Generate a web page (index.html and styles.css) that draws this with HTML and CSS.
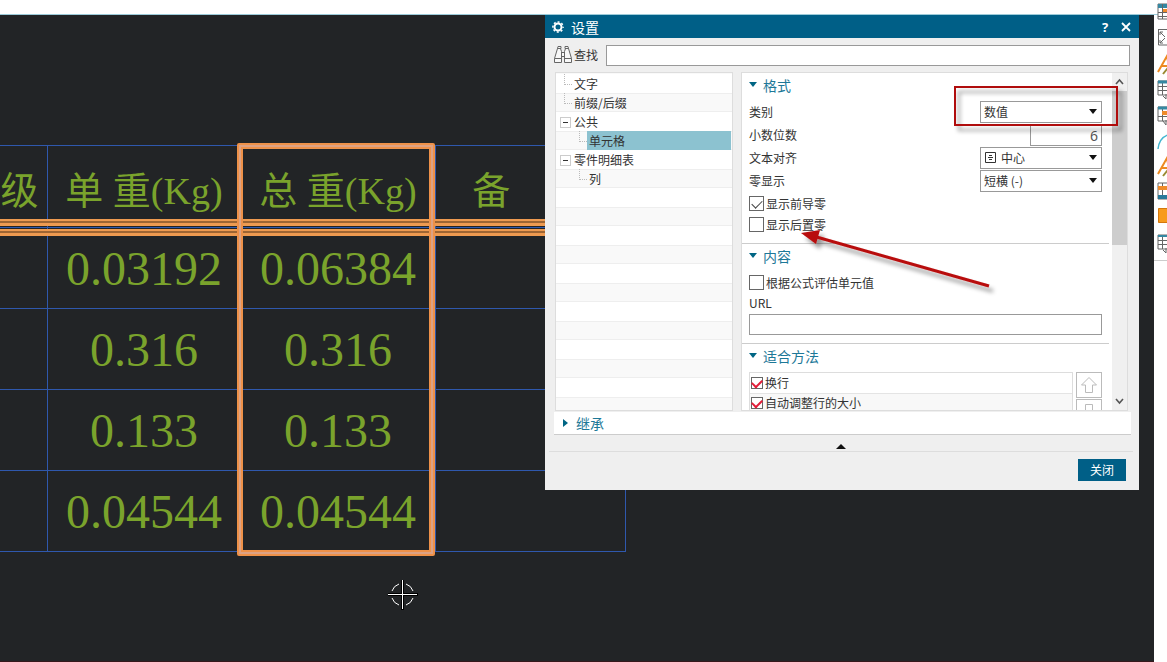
FILE: index.html
```html
<!DOCTYPE html>
<html lang="zh-CN">
<head>
<meta charset="utf-8">
<title>设置</title>
<link rel="stylesheet" href="styles.css">
</head>
<body>
<div class="topbar"></div>
<main class="workspace">
  <section class="canvas">
    <div class="drawing">
      <table class="parts">
        <colgroup><col class="c-grade"><col class="c-weight"><col class="c-weight"><col class="c-note"></colgroup>
        <thead><tr><th class="grade">级</th><th>单 重(Kg)</th><th>总 重(Kg)</th><th class="note">备</th></tr></thead>
        <tbody>
          <tr><td></td><td>0.03192</td><td>0.06384</td><td></td></tr>
          <tr><td></td><td>0.316</td><td>0.316</td><td></td></tr>
          <tr><td></td><td>0.133</td><td>0.133</td><td></td></tr>
          <tr><td></td><td>0.04544</td><td>0.04544</td><td></td></tr>
        </tbody>
      </table>
      <div class="rule rule-top"></div>
      <div class="rule rule-bottom"></div>
      <div class="column-mark"></div>
    </div>
    <svg class="cursor" width="30" height="30" viewBox="0 0 30 30" fill="none" stroke="#fff">
      <path d="M14.5 0v30M0 14.5h30" stroke="#000" stroke-width="3"/>
      <path d="M14.5 0v29M0 14.5h29"/>
      <path d="M4 11a11 11 0 0 1 7-7M18 4a11 11 0 0 1 7 7M25 18a11 11 0 0 1-7 7M11 25a11 11 0 0 1-7-7"/>
    </svg>

    <form class="dialog" aria-labelledby="dialog-title">
      <header class="titlebar">
        <svg width="12" height="12" viewBox="0 0 12 12" fill="none" stroke="#fff">
          <circle cx="6" cy="6" r="3.5" stroke-width="2"/>
          <circle cx="6" cy="6" r="5.100" stroke-width="1.500" stroke-dasharray="2 2" stroke-dashoffset="1"/>
        </svg>
        <h1 id="dialog-title">设置</h1>
        <button type="button" class="title-btn" aria-label="帮助">?</button>
        <button type="button" class="title-btn" aria-label="关闭窗口"><svg width="10" height="10" viewBox="0 0 10 10" stroke="#fff" stroke-width="1.8"><path d="M1 1l8 8M9 1L1 9"/></svg></button>
      </header>
      <div class="search">
        <svg width="20" height="20" viewBox="0 0 20 20" fill="#f8f8f8" stroke="#666">
          <path d="M4.5 3.5h3l1 3v11h-7v-4zM12.5 3.5h3l3 10v4h-7v-11zM1.500 13.500h7M11.500 13.500h7M5 1.500h3v2H4.500zM12 1.500h3l.5 2h-3.500zM8.500 7.500h3v4h-3z"/>
        </svg>
        <label for="find">查找</label>
        <input id="find" type="text">
      </div>
      <div class="body">
        <ul class="tree">
          <li>文字</li>
          <li>前缀/后缀</li>
          <li class="branch">公共</li>
          <li class="child selected"><span>单元格</span></li>
          <li class="branch">零件明细表</li>
          <li class="child"><span>列</span></li>
        </ul>
        <div class="pane">
          <div class="pane-content">
            <section class="group">
              <h2>格式</h2>
              <div class="field"><label for="kind">类别</label><span class="pick"><select id="kind"><option>数值</option></select></span></div>
              <div class="field"><label for="digits">小数位数</label><input id="digits" class="digits" type="text" value="6"></div>
              <div class="field"><label for="align">文本对齐</label><span class="pick pick-icon"><svg width="12" height="12" viewBox="0 0 12 12" fill="none" stroke="#333"><path d="M.5.5h10v10H.5zM3 5.500h5M4 3.500h3M4 7.500h3"/></svg><select id="align"><option>中心</option></select></span></div>
              <div class="field"><label for="zero">零显示</label><span class="pick"><select id="zero"><option>短横 (-)</option></select></span></div>
              <label class="check"><input type="checkbox" checked>显示前导零</label>
              <label class="check"><input type="checkbox">显示后置零</label>
            </section>
            <section class="group">
              <h2>内容</h2>
              <label class="check"><input type="checkbox">根据公式评估单元值</label>
              <label class="url-label" for="url">URL</label>
              <input id="url" class="url" type="text">
            </section>
            <section class="group">
              <h2>适合方法</h2>
              <div class="fit">
                <div class="fit-list">
                  <label class="check red"><input type="checkbox" checked>换行</label>
                  <label class="check red"><input type="checkbox" checked>自动调整行的大小</label>
                </div>
                <div class="fit-buttons">
                  <button type="button" aria-label="上移"><svg width="18" height="18" viewBox="0 0 18 18" fill="none" stroke="#bbb"><path d="M9 1.500l7.500 7.500h-4v7.500h-7V9h-4z"/></svg></button>
                  <button type="button" aria-label="下移"><svg width="18" height="18" viewBox="0 0 18 18" fill="none" stroke="#bbb"><path d="M9 16.500L1.500 9h4V1.500h7V9h4z"/></svg></button>
                </div>
              </div>
            </section>
          </div>
          <div class="scrollbar">
            <svg width="15" height="18" viewBox="0 0 15 18" fill="none" stroke="#555" stroke-width="1.600"><path d="M4 11l3.500-4L11 11"/></svg>
            <div class="thumb"></div>
            <svg width="15" height="18" viewBox="0 0 15 18" fill="none" stroke="#555" stroke-width="1.600"><path d="M4 7l3.500 4L11 7"/></svg>
          </div>
        </div>
      </div>
      <h2 class="inherit">继承</h2>
      <div class="collapse"></div>
      <footer class="footer"><button type="button" class="close">关闭</button></footer>
      <svg class="callout" width="330" height="220" viewBox="0 0 330 220" fill="none">
        <defs><filter id="shade" x="-10%" y="-10%" width="125%" height="125%"><feDropShadow dx="4" dy="5" stdDeviation="2" flood-color="#000" flood-opacity=".4"/></filter></defs>
        <g filter="url(#shade)">
          <path d="M156 7h162v38H156z" stroke="#b00d10" stroke-width="2"/>
          <path d="M14 156L190 206" stroke="#b80b0b" stroke-width="3"/>
          <path d="M2 153l19-3-4 14z" fill="#b80b0b"/>
        </g>
      </svg>
    </form>
  </section>
  <nav class="tools" aria-label="工具">
    <svg viewBox="0 0 24 24"><path d="M1 4h22v15H1z" fill="#fff" stroke="#666"/><path d="M1 4h22v4H1z" fill="#3688a2"/><path d="M1 12.500h22M1 16.500h22M5.500 4v15" stroke="#666"/><path d="M6 9h18v3H6z" fill="#ef8b2b"/></svg>
    <svg viewBox="0 0 24 24" fill="none" stroke="#666"><path d="M1 3.500h22M1.500 3v16H23M3 9V6h3M3 6l5 5M3 14v3h3M3 17l5-5"/></svg>
    <svg viewBox="0 0 24 24" fill="none" stroke="#ed8a20" stroke-width="2"><path d="M1 20L10 4l3 16M5 14h8"/><path d="M6 22l4-5 4 5" stroke="#9a8a32"/></svg>
    <svg viewBox="0 0 24 24" fill="none" stroke="#666"><path d="M1 3h22v14H1zM1 8.500h22M1 12.500h22M5.500 3v14"/><path d="M1 4h22" stroke="#3688a2" stroke-width="3"/><path d="M6 18l3 3M9 16v5"/></svg>
    <svg viewBox="0 0 24 24" fill="none" stroke="#666"><path d="M1 3h22v14H1zM1 12.500h22M5.500 3v14"/><path d="M1 4h22" stroke="#3688a2" stroke-width="3"/><path d="M5 9h18" stroke="#ef8b2b" stroke-width="4"/><path d="M6 17l3 4M9 16v5"/></svg>
    <svg viewBox="0 0 24 24" fill="none" stroke="#45b6d1" stroke-width="1.500"><path d="M1 19C2 10 7 5 15 4"/></svg>
    <svg viewBox="0 0 24 24" fill="none" stroke="#ed8a20" stroke-width="2"><path d="M1 18L10 2l3 16M5 12h8"/><path d="M6 20l4-5 4 5" stroke="#9a8a32"/></svg>
    <svg viewBox="0 0 24 24" fill="none" stroke="#666"><path d="M1 1h22v16H1zM5.500 1v16"/><path d="M1 6h22" stroke="#ef8b2b" stroke-width="4"/><path d="M1 15h22" stroke="#28799a" stroke-width="4"/></svg>
    <svg viewBox="0 0 24 24"><path d="M1.500.5h22v14h-22z" fill="#f79b1d" stroke="#d4770c"/></svg>
    <svg viewBox="0 0 24 24" fill="none" stroke="#666"><path d="M1 1h22v14H1zM1 6.500h22M1 10.500h22M5.500 1v14"/><path d="M1 2h22" stroke="#3688a2" stroke-width="2"/><path d="M6 16l3 3M9 14v5"/></svg>
  </nav>
</main>
</body>
</html>
```
FILE: styles.css
```css
* { box-sizing: border-box; }
body {
  margin: 0;
  min-height: 100vh;
  display: flex;
  flex-direction: column;
  font: 12px/18px "Noto Sans CJK SC", sans-serif;
  color: #333;
  background: #fff;
}
h1, h2, ul { margin: 0; padding: 0; }
h1, h2 { font-size: 14px; font-weight: 400; }
button, input, select { font: inherit; color: inherit; margin: 0; border-radius: 0; }
.topbar { height: 15px; border-bottom: 1px solid #9ccbd9; }
.workspace { flex: 1; display: flex; }
.canvas {
  flex: 1;
  position: relative;
  overflow: hidden;
  background: #222426;
  border-bottom: 1px solid #35181b;
}

/* Parts list on the drawing sheet */
.drawing { position: absolute; left: 0; top: 130px; }
.parts {
  width: 626px;
  table-layout: fixed;
  border-collapse: collapse;
  font-family: "Liberation Serif", "Noto Sans CJK SC", serif;
  color: #7aa32c;
}
.c-grade { width: 47px; }
.c-weight { width: 194px; }
.parts th, .parts td {
  height: 81px;
  padding: 0;
  border: 1px solid #2f58ad;
  font-weight: 400;
  text-align: center;
  white-space: nowrap;
}
.parts th:first-child, .parts td:first-child { border-left: 0; }
.parts th { height: 82px; padding-top: 8px; font-size: 38px; line-height: 52px; }
.parts td { padding-top: 2px; font-size: 48px; line-height: 52px; }
.parts .grade { padding-right: 8px; text-align: right; }
.parts .note { padding-right: 78px; }
.rule {
  position: absolute;
  left: 0;
  width: 626px;
  height: 7px;
  background: #9e6533;
  border: solid #ee9a50;
  border-width: 2px 0 3px;
}
.rule-top { top: 74px; }
.rule-bottom { top: 84px; }
.column-mark {
  position: absolute;
  left: 237px;
  top: -2px;
  width: 198px;
  height: 413px;
  border: 6px solid #ee9149;
  border-radius: 2px;
  outline: 2px solid #dda283;
  outline-offset: -4px;
}
.cursor { position: absolute; left: 388px; top: 565px; }

/* Settings dialog */
.dialog {
  position: absolute;
  left: 545px;
  right: 15px;
  top: 0;
  background: #efefef;
}
.titlebar {
  display: flex;
  align-items: center;
  height: 23px;
  padding: 0 6px 0 7px;
  gap: 7px;
  background: #005f87;
  color: #fff;
}
.titlebar h1 { flex: 1; }
.title-btn {
  width: 14px;
  padding: 0;
  border: 0;
  background: none;
  font-family: "Noto Sans", sans-serif;
  font-size: 13px;
  font-weight: 700;
  line-height: 18px;
}
.title-btn svg { display: block; margin: auto; }
.search { display: flex; align-items: center; height: 34px; padding: 0 9px 0 8px; }
.search label { width: 33px; padding-left: 1px; }
.search input { flex: 1; height: 21px; border: 1px solid #999; background: #fff; }
.body { display: flex; gap: 8px; height: 339px; padding: 0 11px 0 10px; }
.tree {
  width: 178px;
  padding: 1px 1px 0 0;
  border: 1px solid #ddd;
  overflow: hidden;
  list-style: none;
  background: repeating-linear-gradient(#fff 0 19px, #eee 19px 20px, #f9f9f9 20px 37px, #eee 37px 38px) 0 1px;
}
.tree li { position: relative; height: 19px; line-height: 19px; padding-left: 18px; }
.tree .child { padding-left: 31px; }
.tree .child span { display: block; padding-left: 2px; }
.tree .selected span { background: #8cc2d0; }
.tree li::before {
  content: "";
  position: absolute;
  left: 8px;
  top: 0;
  width: 7px;
  height: 10px;
  border: dotted #bbb;
  border-width: 0 0 1px 1px;
}
.tree .child::before { left: 23px; }
.tree .branch::before {
  content: "";
  left: 4px;
  top: 5px;
  width: 9px;
  height: 9px;
  border: 1px solid #ccc;
  background: linear-gradient(#333, #333) center / 5px 1px no-repeat #fff;
}
.pane { flex: 1; display: flex; border: 1px solid #ddd; background: #fff; overflow: hidden; }
.pane-content { flex: 1; padding-right: 3px; }
.group { padding: 0 7px 8px; border-bottom: 1px solid #ccc; }
.group h2 { height: 23px; margin-bottom: 5px; }
.group h2, .inherit { display: flex; align-items: center; color: #1d7898; }
.group h2::before {
  content: "";
  margin-right: 6px;
  border: solid transparent;
  border-width: 5px 4px 0;
  border-top-color: #006584;
}
.field { display: flex; justify-content: space-between; align-items: center; height: 22px; margin-bottom: 1px; }
.pick { position: relative; width: 122px; height: 22px; }
.pick select {
  width: 100%;
  height: 22px;
  padding: 0 3px;
  border: 1px solid #999;
  background: #fff;
  appearance: none;
  line-height: 20px;
}
.pick::after {
  content: "";
  position: absolute;
  right: 5px;
  top: 8px;
  border: solid transparent;
  border-width: 5px 4px 0;
  border-top-color: #111;
  pointer-events: none;
}
.pick-icon svg { position: absolute; left: 5px; top: 5px; pointer-events: none; }
.pick-icon select { padding-left: 20px; }
.digits { width: 72px; height: 21px; padding: 0 3px; border: 1px solid #999; text-align: right; font-family: "Noto Sans", sans-serif; font-size: 14px; color: #555; }
.check { display: flex; align-items: center; gap: 2px; height: 21px; }
.check input {
  appearance: none;
  width: 15px;
  height: 15px;
  border: 1px solid #666;
  background: #fff;
  display: grid;
  place-items: center;
}
.check input:checked::before {
  content: "";
  width: 9px;
  height: 5px;
  border: solid #444;
  border-width: 0 0 1px 1px;
  transform: translateY(-1px) rotate(-45deg);
}
.url-label { display: block; height: 21px; line-height: 20px; }
.url { display: block; width: 100%; height: 21px; border: 1px solid #999; }
.fit { display: flex; gap: 3px; }
.fit-list { flex: 1; border: 1px solid #ddd; border-bottom: 0; }
.red { height: 20px; padding-left: 1px; }
.red + .red { height: 19px; background: #f8f8f8; border-top: 1px solid #e4e4e4; }
.red input { width: 12px; height: 12px; }
.red input:checked::before { width: 8px; height: 5px; border-color: #e21e39; border-width: 0 0 2px 2px; }
.fit-buttons { display: grid; gap: 1px; }
.fit-buttons button { width: 26px; height: 26px; padding: 3px; border: 1px solid #bbb; background: #fff; }
.fit-buttons svg { display: block; }
.scrollbar { display: flex; flex-direction: column; width: 15px; justify-content: space-between; background: #f0f0f0; }
.scrollbar svg { display: block; }
.thumb { height: 154px; margin-bottom: auto; background: #cdcdcd; }
.inherit {
  height: 23px;
  margin: 1px 8px 0 9px;
  padding-left: 9px;
  border-bottom: 1px solid #ccc;
  background: #fff;
}
.inherit::before {
  content: "";
  margin-right: 8px;
  border: solid transparent;
  border-width: 4px 0 4px 5px;
  border-left-color: #006584;
}
.collapse { display: flex; justify-content: center; height: 17px; margin: 0 6px 0 4px; padding-top: 9px; border-bottom: 1px solid #ddd; }
.collapse::before { content: ""; width: 10px; height: 5px; background: #111; clip-path: polygon(50% 0, 100% 100%, 0 100%); }
.footer { display: flex; justify-content: flex-end; padding: 7px 13px 9px; }
.close { width: 48px; height: 22px; padding: 0; border: 0; background: #005f87; color: #fff; }
.callout { position: absolute; right: 10px; top: 65px; pointer-events: none; }

/* Docked tool strip */
.tools { width: 13px; padding-left: 3px; overflow: hidden; align-self: flex-start; border-bottom: 1px solid #ccc; margin-top: -15px; }
.tools svg { display: block; width: 24px; height: 24px; margin-bottom: 2px; }
```
